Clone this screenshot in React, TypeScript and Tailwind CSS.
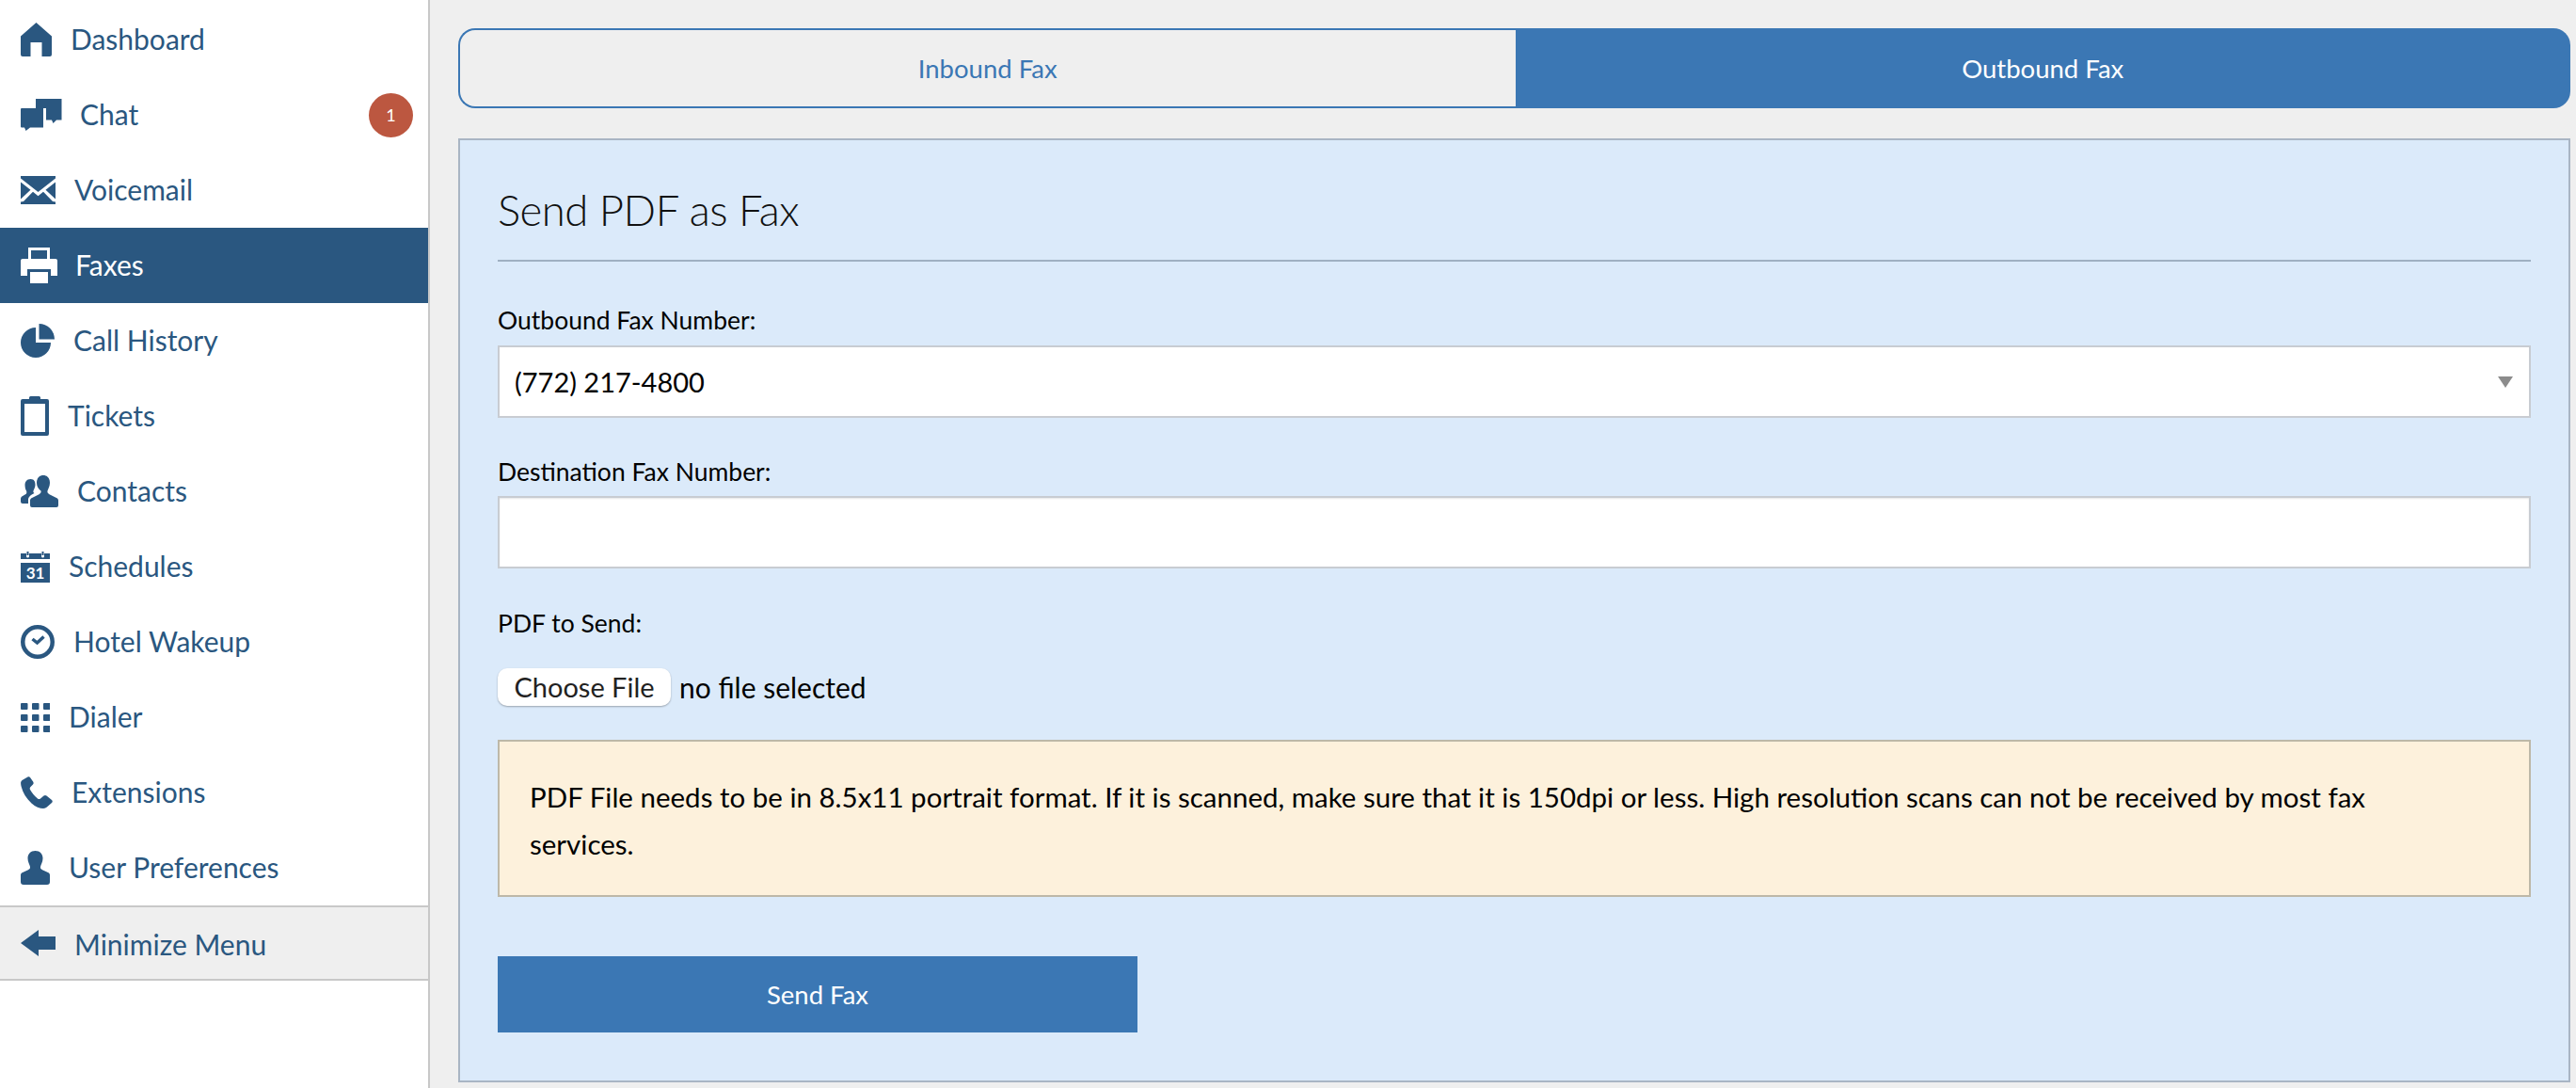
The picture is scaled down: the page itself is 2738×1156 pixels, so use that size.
import type { ReactNode } from "react";

function Home() {
	return (
		<svg width="33" height="36" viewBox="0 0 33 36" fill="currentColor">
			<path d="M16.500 0 33 14.500V34q0 2-2 2h-8.500V21h-12v15H2q-2 0-2-2V14.500Z" />
		</svg>
	);
}

function Chat() {
	return (
		<svg width="44" height="34" viewBox="0 0 44 34" fill="currentColor" className="-mr-px">
			<path d="M16 0h27.500v22.500h-5.500l-3.500 3.500-1.500-3.500H27V10H16Z" />
			<path d="M0 11q0-1 1-1h23v20.500H10L5.500 34 4 30.500H1q-1 0-1-1Z" />
		</svg>
	);
}

function Mail() {
	return (
		<svg width="37" height="30" viewBox="0 0 37 30" fill="currentColor">
			<path d="M0 0h37v2.500L18.500 17 0 2.500Z" />
			<path d="M0 6.500 10.500 14.800 0 24.500Z" />
			<path d="M37 6.500 26.500 14.800 37 24.500Z" />
			<path d="M13 16.800l5.500 4.400 5.500-4.400L34 27l3 .5V30H0v-2.500l3-.5Z" />
		</svg>
	);
}

function Printer() {
	return (
		<svg width="39" height="38" viewBox="0 0 39 38" fill="currentColor" className="-mr-px">
			<path fillRule="evenodd" d="M8 0h23v12H8Zm3 3v9h17V3Z" />
			<path d="M2 12h35q2 0 2 2v16h-7v-7H7v7H0V14q0-2 2-2Z" />
			<path d="M10 26h19v12H10Z" />
		</svg>
	);
}

function Pie() {
	return (
		<svg width="36" height="36" viewBox="0 0 36 36" fill="currentColor">
			<path d="M16 4v16h16A16 16 0 1 1 16 4Z" />
			<path d="M19.500 0A16.500 16.500 0 0 1 36 16.500H19.500Z" />
		</svg>
	);
}

function Clipboard() {
	return (
		<svg width="30" height="42" viewBox="0 0 30 42" fill="currentColor">
			<path fillRule="evenodd" d="M9 3V1.500Q9 0 10.500 0h9Q21 0 21 1.500V3h7q2 0 2 2v35q0 2-2 2H2q-2 0-2-2V5q0-2 2-2Zm-5 5v30h22V8Z" />
		</svg>
	);
}

function Contacts() {
	return (
		<svg width="40" height="34" viewBox="0 0 40 34" fill="currentColor">
			<path d="M10.500 4c4 0 5 3 5 6 0 3-1.500 5-2 6.500-.3 1 0 2 1 2.500-4 2-6.500 4-6.500 7v4H2q-2 0-2-2v-3c0-3 5-4 6-5.500.5-1 .5-2 0-3C5 15 4.500 12.500 4.500 10c0-3 2-6 6-6Z" />
			<path d="M24 0c5 0 7 4 7 8 0 4-2 6.500-2.500 8.500-.4 1.800.5 3 2 3.700L38 24c1.500.7 2 1.500 2 3v5q0 2-2 2H12q-2 0-2-2v-5c0-1.500.5-2.300 2-3l7.500-3.800c1.500-.7 2.400-1.900 2-3.700C19 14.500 17 12 17 8c0-4 2-8 7-8Z" />
		</svg>
	);
}

function Calendar() {
	return (
		<svg width="31" height="33" viewBox="0 0 31 33" fill="currentColor">
			<path d="M0 2h6v3a1.500 1.500 0 0 0 3 0V2h13v3a1.500 1.500 0 0 0 3 0V2h6v6H0Z" />
			<path d="M6.500 0h2v4h-2ZM22.500 0h2v4h-2Z" />
			<path d="M0 12h31v21H0Z" />
			<text x="15.500" y="29" textAnchor="middle" fill="#ffffff" fontSize="17" fontWeight="700" fontFamily="Lato, sans-serif">31</text>
		</svg>
	);
}

function Clock() {
	return (
		<svg width="36" height="36" viewBox="0 0 36 36" fill="none" stroke="currentColor">
			<circle cx="18" cy="18" r="15.750" strokeWidth="4.500" />
			<path d="M12.500 15 17.500 19 24.500 12.500" strokeWidth="3.500" />
		</svg>
	);
}

function Dialer() {
	const cells = [0, 12, 24];
	return (
		<svg width="31" height="31" viewBox="0 0 31 31" fill="currentColor">
			{cells.map((y) => cells.map((x) => <rect key={`${x}-${y}`} x={x} y={y} width="7.500" height="7" rx="1" />))}
		</svg>
	);
}

function Phone() {
	return (
		<svg width="34" height="34" viewBox="0 0 34 34" fill="currentColor">
			<path d="M7.500.500 1.500 4C-.5 5.500 0 8 .7 11c1.500 6 5 12 10.800 17.500 4 3.700 9 5.500 12.500 5.500 2 0 3.500-1 5-2.500l4-3.500c1-1 1-2 0-3l-5.500-4.500c-1-.8-2-.8-3 0L21 23.500c-1 .7-2 .8-3 0-3.500-2.700-6-6-8-9.500-.5-1-.4-2 .3-2.800l2.700-2.700c.8-.8.8-1.700.3-2.700L10 1C9.300 0 8.500 0 7.500.500Z" />
		</svg>
	);
}

function User() {
	return (
		<svg width="31" height="36" viewBox="0 0 31 36" fill="currentColor">
			<path d="M15.500 0c5 0 8 3.500 8 8 0 4-2 6.500-2.500 9-.3 1.500.5 2.500 2 3.200l6 2.800c1.500.7 2 1.500 2 3V33q0 3-3 3H3q-3 0-3-3v-7c0-1.500.5-2.300 2-3l6-2.800c1.500-.7 2.300-1.700 2-3.200-.5-2.500-2.500-5-2.500-9 0-4.500 3-8 8-8Z" />
		</svg>
	);
}

function ArrowLeft() {
	return (
		<svg width="37" height="28" viewBox="0 0 37 28" fill="currentColor">
			<path d="M0 14 19 0v7h18v14H19v7Z" />
		</svg>
	);
}

const navItems: { label: string; icon: ReactNode; badge?: string; active?: boolean }[] = [
	{ label: "Dashboard", icon: <Home /> },
	{ label: "Chat", icon: <Chat />, badge: "1" },
	{ label: "Voicemail", icon: <Mail /> },
	{ label: "Faxes", icon: <Printer />, active: true },
	{ label: "Call History", icon: <Pie /> },
	{ label: "Tickets", icon: <Clipboard /> },
	{ label: "Contacts", icon: <Contacts /> },
	{ label: "Schedules", icon: <Calendar /> },
	{ label: "Hotel Wakeup", icon: <Clock /> },
	{ label: "Dialer", icon: <Dialer /> },
	{ label: "Extensions", icon: <Phone /> },
	{ label: "User Preferences", icon: <User /> },
];

function Sidebar() {
	return (
		<aside className="w-[457px] shrink-0 border-r-2 border-[#c8c8c8] bg-white pt-[2px]">
			<nav>
				{navItems.map((item) => (
					<a
						key={item.label}
						href="#"
						className={`flex h-[80px] items-center gap-5 pr-[16px] pl-[22px] ${item.active ? "bg-[#2a5780] text-white" : "text-[#2a5780]"}`}
					>
						{item.icon}
						<span className="pb-[2px] text-[30px]">{item.label}</span>
						{item.badge && (
							<span className="ml-auto flex size-[47px] items-center justify-center rounded-full bg-[#bc5740] text-[18px] text-white">
								{item.badge}
							</span>
						)}
					</a>
				))}
			</nav>
			<button
				type="button"
				className="flex h-[80px] w-full items-center gap-5 border-y-2 border-[#c8c8c8] bg-[#efefef] pl-[22px] text-[30px] text-[#2a5780]"
			>
				<ArrowLeft />
				<span className="pt-[2px]">Minimize Menu</span>
			</button>
		</aside>
	);
}

function FaxForm() {
	return (
		<form className="flex-1 border-2 border-[#a9b5c4] bg-[#dbeafa] px-[40px] pt-[43px] text-black">
			<h1 className="border-b-2 border-[#9fb0c2] pb-[22px] text-[45.500px] leading-[62px] font-light tracking-[-0.5px] text-[#111111]">
				Send PDF as Fax
			</h1>

			<label className="mt-[46px] block text-[26.500px] leading-[32px]">Outbound Fax Number:</label>
			<div className="relative mt-[11px]">
				<select className="block h-[77px] w-full appearance-none border-2 border-[#c8ccd2] bg-white px-[16px] text-[29px] text-black">
					<option>(772) 217-4800</option>
				</select>
				<span className="absolute top-[33px] right-[19px] size-0 border-x-[8px] border-t-[12px] border-x-transparent border-t-[#8c8c8c]" />
			</div>

			<label className="mt-[41px] block text-[26.500px] leading-[32px]">Destination Fax Number:</label>
			<input
				type="text"
				className="mt-[10px] block h-[77px] w-full border-2 border-[#c8ccd2] bg-white px-[16px] text-[29px] shadow-[inset_0_1px_2px_rgba(0,0,0,0.1)]"
			/>

			<label className="mt-[42px] block text-[26.500px] leading-[32px]">PDF to Send:</label>
			<div className="mt-[32px] flex items-center gap-[9px]">
				<button
					type="button"
					className="h-[40px] w-[184px] rounded-[10px] bg-white text-[29px] leading-[36px] text-[#222222] shadow-[0_1px_2px_rgba(0,0,0,0.3)]"
				>
					Choose File
				</button>
				<span className="text-[30px] leading-[36px]">no file selected</span>
			</div>

			<div className="mt-[36px] h-[167px] border-2 border-[#bdb8a8] bg-[#fdf1dc] pt-[34px] pr-[100px] pl-[32px] text-[29.500px] leading-[50px]">
				PDF File needs to be in 8.5x11 portrait format. If it is scanned, make sure that it is 150dpi or less. High resolution scans can not be received by most fax services.
			</div>

			<button type="submit" className="mt-[63px] block h-[81px] w-[680px] bg-[#3b77b4] text-[27.500px] text-white">
				Send Fax
			</button>
		</form>
	);
}

export default function App() {
	return (
		<div className="flex h-[1156px] w-[2738px] overflow-hidden bg-[#efefef] font-[Lato,sans-serif]">
			<Sidebar />
			<main className="flex flex-1 flex-col pt-[30px] pr-[6px] pb-[6px] pl-[30px]">
				<div className="flex h-[85px] text-[27.500px]">
					<button type="button" className="flex-1 rounded-l-[18px] border-2 border-r-0 border-[#3b77b4] bg-[#efefef] text-[#3b77b4]">
						Inbound Fax
					</button>
					<button type="button" className="flex-1 rounded-r-[18px] bg-[#3b77b4] text-white">
						Outbound Fax
					</button>
				</div>
				<div className="mt-[32px] flex flex-1 flex-col">
					<FaxForm />
				</div>
			</main>
		</div>
	);
}
